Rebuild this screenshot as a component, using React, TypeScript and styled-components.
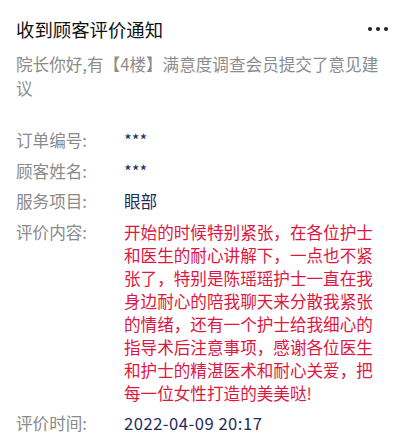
import styled, { createGlobalStyle } from "styled-components";

const GlobalStyle = createGlobalStyle`
  html, body {
    margin: 0;
    padding: 0;
    background: #fff;
  }
  body {
    font-family: "Noto Sans CJK SC", "Noto Sans", sans-serif;
  }
`;

type Row = {
  label: string;
  value: string;
  tone?: "navy" | "red";
  spaced?: boolean;
};

const rows: Row[] = [
  { label: "订单编号:", value: "***" },
  { label: "顾客姓名:", value: "***" },
  { label: "服务项目:", value: "眼部" },
  {
    label: "评价内容:",
    value:
      "开始的时候特别紧张，在各位护士和医生的耐心讲解下，一点也不紧张了，特别是陈瑶瑶护士一直在我身边耐心的陪我聊天来分散我紧张的情绪，还有一个护士给我细心的指导术后注意事项，感谢各位医生和护士的精湛医术和耐心关爱，把每一位女性打造的美美哒!",
    tone: "red",
  },
  { label: "评价时间:", value: "2022-04-09 20:17", spaced: true },
];

export default function App() {
  return (
    <>
      <GlobalStyle />
      <Card>
        <Header>
          <Title>收到顾客评价通知</Title>
          <MoreButton aria-label="更多">
            <Dot />
            <Dot />
            <Dot />
          </MoreButton>
        </Header>
        <Summary>院长你好,有【4楼】满意度调查会员提交了意见建议</Summary>
        <Details>
          {rows.map((row) => (
            <DetailRow key={row.label}>
              <Label>{row.label}</Label>
              <Value $tone={row.tone ?? "navy"} $spaced={!!row.spaced}>
                {row.value}
              </Value>
            </DetailRow>
          ))}
        </Details>
      </Card>
    </>
  );
}

const Card = styled.div`
  padding: 16px 16px 0 16px;
  display: flex;
  flex-direction: column;
`;

const Header = styled.div`
  display: flex;
  align-items: center;
  justify-content: space-between;
  height: 26px;
`;

const Title = styled.h1`
  margin: 0;
  font-size: 18.4px;
  font-weight: 400;
  line-height: 26px;
  color: #111;
`;

const MoreButton = styled.div`
  display: flex;
  align-items: center;
  gap: 4px;
  padding-right: 1px;
`;

const Dot = styled.span`
  width: 4px;
  height: 4px;
  border-radius: 50%;
  background: #222;
`;

const Summary = styled.p`
  margin: 11px 0 0 0;
  font-size: 16.6px;
  line-height: 23.5px;
  color: #8c8c8c;
`;

const Details = styled.div`
  margin-top: 29px;
  display: flex;
  flex-direction: column;
  gap: 7.5px;
`;

const DetailRow = styled.div`
  display: flex;
  align-items: flex-start;
`;

const Label = styled.div`
  flex: 0 0 108px;
  font-size: 16.6px;
  line-height: 23px;
  color: #8a8a8a;
`;

const Value = styled.div<{ $tone: "navy" | "red"; $spaced: boolean }>`
  max-width: 256px;
  font-size: 16.6px;
  line-height: 23px;
  letter-spacing: ${({ $spaced }) => ($spaced ? "0.5px" : "0")};
  color: ${({ $tone }) => ($tone === "red" ? "#dc1740" : "#1d2b5e")};
  word-break: break-all;
`;
